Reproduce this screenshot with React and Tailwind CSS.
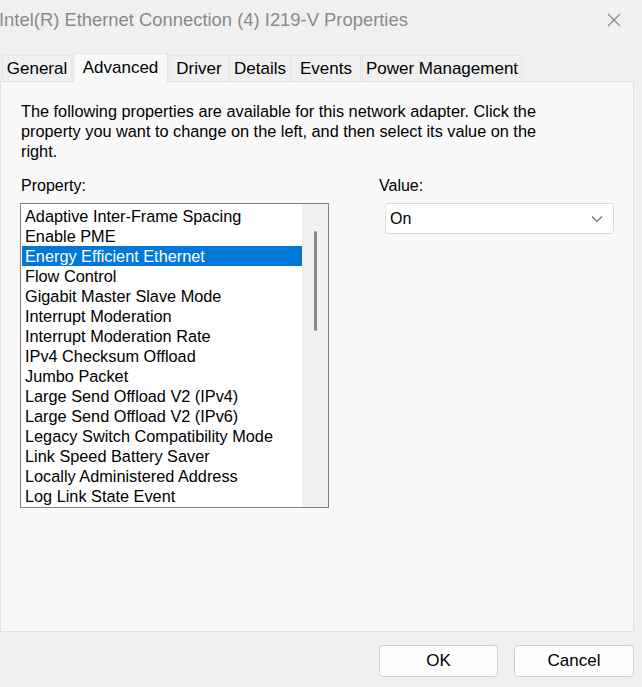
import React, { useState } from "react";

const tabs = [
  { name: "General", w: "w-[70px]" },
  { name: "Advanced", w: "w-[95px]" },
  { name: "Driver", w: "w-[60px]" },
  { name: "Details", w: "w-[60px]" },
  { name: "Events", w: "w-[70px]" },
  { name: "Power Management", w: "w-[160px]" },
];

const properties = [
  "Adaptive Inter-Frame Spacing",
  "Enable PME",
  "Energy Efficient Ethernet",
  "Flow Control",
  "Gigabit Master Slave Mode",
  "Interrupt Moderation",
  "Interrupt Moderation Rate",
  "IPv4 Checksum Offload",
  "Jumbo Packet",
  "Large Send Offload V2 (IPv4)",
  "Large Send Offload V2 (IPv6)",
  "Legacy Switch Compatibility Mode",
  "Link Speed Battery Saver",
  "Locally Administered Address",
  "Log Link State Event",
];

export default function App() {
  const [activeTab, setActiveTab] = useState("Advanced");
  const [selected, setSelected] = useState("Energy Efficient Ethernet");

  return (
    <div className="w-[642px] h-[687px] overflow-hidden bg-[#f0f0f0] flex flex-col font-['Liberation_Sans',Arial,sans-serif] text-black">
      {/* title bar */}
      <div className="h-[40px] flex items-center justify-between pr-[20px]">
        <span className="ml-[-1px] text-[18.4px] text-[#8a8a8a] whitespace-nowrap">
          Intel(R) Ethernet Connection (4) I219-V Properties
        </span>
        <svg width="16" height="16" viewBox="0 0 16 16" className="text-[#8a8a8a]">
          <path d="M2 2 L14 14 M14 2 L2 14" stroke="currentColor" strokeWidth="1.2" />
        </svg>
      </div>

      {/* tabs */}
      <div className="mt-[12px] h-[29px] flex items-end gap-[1px] pl-[2px]">
        {tabs.map((t) => {
          const active = t.name === activeTab;
          return (
            <button
              key={t.name}
              onClick={() => setActiveTab(t.name)}
              className={
                active
                  ? `${t.w} h-[29px] bg-[#f9f9f9] border border-b-0 border-[#e3e3e3] text-[17px] leading-[22px] whitespace-nowrap relative top-[1px]`
                  : `${t.w} h-[26px] bg-[#f0f0f0] border border-b-0 border-[#e6e6e6] text-[17px] leading-[24px] whitespace-nowrap`
              }
            >
              {t.name}
            </button>
          );
        })}
      </div>

      {/* panel */}
      <div className="w-[634px] h-[551px] bg-[#f9f9f9] border border-[#e2e2e2] pt-[19px] px-[19px]">
        <p className="text-[16.3px] leading-[20px] pl-[1px] w-[540px]">
          The following properties are available for this network adapter. Click the property you want to change on the left, and then select its value on the right.
        </p>

        <div className="flex mt-[15px]">
          <div className="w-[310px]">
            <div className="text-[16px] leading-[20px] pl-[1px]">Property:</div>
            <div className="mt-[7px] h-[305px] bg-white border border-[#828282] flex">
              <ul className="flex-1 pt-[2px] pl-[1px]">
                {properties.map((p) => (
                  <li
                    key={p}
                    onClick={() => setSelected(p)}
                    className={
                      p === selected
                        ? "h-[20px] leading-[20px] text-[16.3px] pl-[3px] bg-[#0078d7] text-white whitespace-nowrap"
                        : "h-[20px] leading-[20px] text-[16.3px] pl-[3px] whitespace-nowrap"
                    }
                  >
                    {p}
                  </li>
                ))}
              </ul>
              <div className="w-[26px] bg-[#f0f0f0] flex justify-center pt-[27px] pl-[1px]">
                <div className="w-[3px] h-[100px] rounded-full bg-[#8a8a8a]"></div>
              </div>
            </div>
          </div>

          <div className="ml-[50px]">
            <div className="text-[16px] leading-[20px]">Value:</div>
            <div className="mt-[7px] ml-[6px] w-[229px] h-[31px] bg-white border border-[#dcdcdc] rounded-[3px] flex items-center justify-between pl-[4px] pr-[10px]">
              <span className="text-[16px]">On</span>
              <svg width="12" height="8" viewBox="0 0 12 8" className="text-[#6a6a6a]">
                <path d="M1 1.5 L6 6.5 L11 1.5" stroke="currentColor" strokeWidth="1.1" fill="none" />
              </svg>
            </div>
          </div>
        </div>
      </div>

      {/* buttons */}
      <div className="flex justify-end gap-[16px] pr-[8px] mt-[13px]">
        <button className="w-[119px] h-[32px] bg-[#fdfdfd] border border-[#d0d0d0] rounded-[4px] text-[17px]">OK</button>
        <button className="w-[120px] h-[32px] bg-[#fdfdfd] border border-[#d0d0d0] rounded-[4px] text-[17px]">Cancel</button>
      </div>
    </div>
  );
}
